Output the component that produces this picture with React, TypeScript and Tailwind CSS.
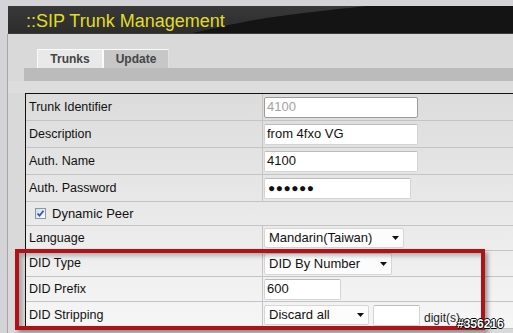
import React from "react";

type RowProps = { label: string; h: string; children?: React.ReactNode };

const Row = ({ label, h, children }: RowProps) => (
  <div className={`flex border-b border-[#c4c4c4] ${h}`}>
    <div className="w-[237px] shrink-0 border-r border-[#c4c4c4] pl-[3px] flex items-center text-[12.5px] text-[#111]">
      {label}
    </div>
    <div className="flex flex-1 items-center gap-[4px] pl-[1px]">{children}</div>
  </div>
);

const Field = ({ w, value, muted }: { w: string; value?: React.ReactNode; muted?: boolean }) => (
  <div
    className={`${w} h-[21px] bg-white border rounded-[2px] px-[2px] flex items-center text-[13px] ${
      muted ? "border-[#9c9c9c] text-[#a3a3a3]" : "border-[#d4d4d4] border-t-[#bcbcbc] text-[#111]"
    }`}
  >
    {value}
  </div>
);

const Select = ({ w, h, value }: { w: string; h: string; value: string }) => (
  <div
    className={`${w} ${h} bg-[#fcfcfc] border border-[#d6d6d6] rounded-[2px] pl-[4px] pr-[4px] flex items-center justify-between text-[13px] text-[#111]`}
  >
    <span>{value}</span>
    <svg width="7" height="4" viewBox="0 0 7 4">
      <path d="M0 0h7L3.5 4z" fill="#111" />
    </svg>
  </div>
);

export default function App() {
  return (
    <div className="relative w-[513px] h-[333px] overflow-hidden bg-[#d4d4d8] font-['Liberation_Sans',Arial,sans-serif]">
      {/* header banner */}
      <div className="pt-[6px] pl-[8px]">
        <div className="relative h-[28px] bg-[#141414] overflow-hidden border-b border-[#3a3a3a]">
          <svg className="absolute inset-0" width="505" height="28" viewBox="0 0 505 28">
            <defs>
              <linearGradient id="hl" x1="0" y1="0" x2="0" y2="1">
                <stop offset="0" stopColor="#383838" />
                <stop offset="1" stopColor="#2c2c2c" />
              </linearGradient>
            </defs>
            <path d="M0 0H359C330 3 282 8 246 14C220 19 198 24 180 28H0Z" fill="url(#hl)" />
          </svg>
          <div className="relative pl-[18px] leading-[28px] pt-[1px] text-[18px] text-[#e3dc24]">
            ::SIP Trunk Management
          </div>
        </div>
      </div>

      {/* panel */}
      <div className="ml-[7px] h-full border-l border-[#a6a6a6] bg-[#d9d9d9]">
        <div className="flex pt-[15px] pl-[29px]">
          <div className="w-[66px] h-[19px] bg-[#e9e9e9] border-t border-l border-r border-[#fafafa] flex items-center justify-center text-[12px] font-bold text-[#454545]">
            Trunks
          </div>
          <div className="w-[66px] h-[19px] bg-[#c7c7c7] border-t border-l border-[#fafafa] border-r border-r-[#e0e0e0] flex items-center justify-center text-[12px] font-bold text-[#454545]">
            Update
          </div>
        </div>
        <div className="ml-[16px] h-[13px] bg-[#bbbbbb]" />
        <div className="h-[12px] bg-[#dddddd]" />

        <div className="ml-[17px] border-t border-l border-[#111] bg-linear-to-b from-[#dcdcdc] to-[#f6f6f6]">
          <Row label="Trunk Identifier" h="h-[27px]">
            <Field w="w-[154px]" value="4100" muted />
          </Row>
          <Row label="Description" h="h-[27px]">
            <Field w="w-[154px]" value="from 4fxo VG" />
          </Row>
          <Row label="Auth. Name" h="h-[27px]">
            <Field w="w-[154px]" value="4100" />
          </Row>
          <Row label="Auth. Password" h="h-[27px]">
            <Field
              w="w-[147px]"
              value={<span className="text-[12px] tracking-[0.5px] pl-[1px]">●●●●●●</span>}
            />
          </Row>
          <div className="flex items-center h-[24px] border-b border-[#c4c4c4] pl-[9px] gap-[6px] text-[13px] text-[#111]">
            <span className="w-[11px] h-[11px] border border-[#8496b0] bg-linear-to-br from-[#d8d8d8] to-white flex items-center justify-center">
              <svg width="9" height="9" viewBox="0 0 9 9">
                <path d="M1.5 4.5l2 2.2 4-5" stroke="#2a52be" strokeWidth="1.8" fill="none" />
              </svg>
            </span>
            Dynamic Peer
          </div>
          <Row label="Language" h="h-[25px]">
            <Select w="w-[140px]" h="h-[20px]" value="Mandarin(Taiwan)" />
          </Row>
          <Row label="DID Type" h="h-[26px]">
            <Select w="w-[128px]" h="h-[22px]" value="DID By Number" />
          </Row>
          <Row label="DID Prefix" h="h-[25px]">
            <Field w="w-[77px]" value="600" />
          </Row>
          <Row label="DID Stripping" h="h-[27px]">
            <Select w="w-[105px]" h="h-[20px]" value="Discard all" />
            <Field w="w-[47px]" />
            <span className="self-end pb-[1px] text-[12px] text-[#222]">digit(s)</span>
          </Row>
        </div>
      </div>

      {/* red highlight box */}
      <div className="absolute left-[15px] top-[249px] w-[470px] h-[81px] border-4 border-[#b01217] shadow-[3px_3px_4px_rgba(0,0,0,0.35),inset_3px_3px_4px_rgba(0,0,0,0.25)]" />

      {/* watermark */}
      <div className="absolute left-[457px] top-[318px] text-[12px] leading-[12px] font-bold text-white [text-shadow:1px_0_0_#000,-1px_0_0_#000,0_1px_0_#000,0_-1px_0_#000]">
        #356216
      </div>
    </div>
  );
}
